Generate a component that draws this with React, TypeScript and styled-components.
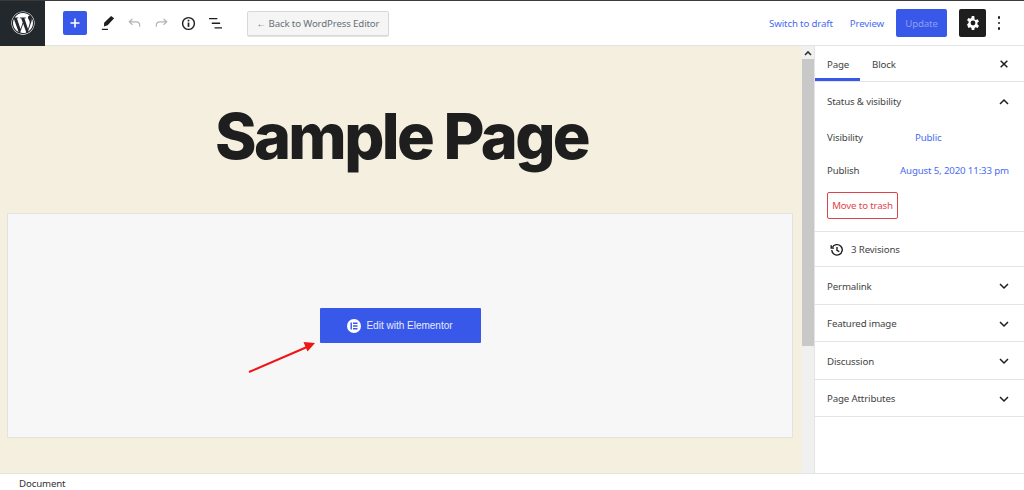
import React from 'react'
import styled, { createGlobalStyle } from 'styled-components'
import { FaWordpress } from 'react-icons/fa'

const $blue = '#3858e9'
const $link = '#4a6bf0'
const $line = '#e4e4e4'

const GlobalStyle = createGlobalStyle`
  html, body { margin: 0; padding: 0; background: #fff; }
  body {
    font-family: "Noto Sans", "Open Sans", sans-serif;
    font-size: 9.7px;
    letter-spacing: -0.15px;
    color: #444;
  }
  * { box-sizing: border-box; }
`

const Chevron = ({ up }: { up?: boolean }) => (
  <svg width="12" height="12" viewBox="0 0 12 12" fill="none" stroke="#1e1e1e" strokeWidth="1.5">
    <path d={up ? 'M2 8 6 4l4 4' : 'M2 4l4 4 4-4'} />
  </svg>
)

const panels = ['Permalink', 'Featured image', 'Discussion', 'Page Attributes']

export default function App() {
  return (
    <Screen>
      <GlobalStyle />
      <Header>
        <Logo>
          <FaWordpress size={24} color="#fff" />
        </Logo>
        <Tools>
          <AddButton>
            <svg width="14" height="14" viewBox="0 0 14 14" fill="none" stroke="#fff" strokeWidth="1.6">
              <path d="M7 2.5v9M2.5 7h9" />
            </svg>
          </AddButton>
          <ToolIcon>
            <svg width="14" height="16" viewBox="0 0 16 18" fill="#1e1e1e">
              <path d="M11.5 1 15 3.6 7.6 11.6 3.4 13 3.6 8.6z" />
              <path d="M1 15.6h7v1.4H1z" />
            </svg>
          </ToolIcon>
          <ToolIcon>
            <svg width="13" height="10" viewBox="0 0 16 12" fill="none" stroke="#b4b4b4" strokeWidth="1.5">
              <path d="M5.5 1 1.6 4.6l3.9 3.6M1.8 4.6h8.2c2.6 0 4.4 1.9 4.4 4.6v1.3" />
            </svg>
          </ToolIcon>
          <ToolIcon>
            <svg width="13" height="10" viewBox="0 0 16 12" fill="none" stroke="#b4b4b4" strokeWidth="1.5">
              <path d="M10.5 1l3.9 3.6-3.9 3.6M14.2 4.6H6c-2.6 0-4.4 1.9-4.4 4.6v1.3" />
            </svg>
          </ToolIcon>
          <ToolIcon>
            <svg width="15" height="15" viewBox="0 0 16 16" fill="none" stroke="#1e1e1e" strokeWidth="1.5">
              <circle cx="8" cy="8" r="6.3" />
              <path d="M8 7v4.6" strokeWidth="1.8" />
              <path d="M8 4v1.8" strokeWidth="1.8" />
            </svg>
          </ToolIcon>
          <ToolIcon>
            <svg width="15" height="13" viewBox="0 0 16 14" fill="#1e1e1e">
              <path d="M1 1h9v1.5H1zM4 6h9v1.5H4zM7 11h8v1.5H7z" />
            </svg>
          </ToolIcon>
        </Tools>
        <BackButton>← Back to WordPress Editor</BackButton>
        <Actions>
          <TextLink>Switch to draft</TextLink>
          <TextLink tight>Preview</TextLink>
          <UpdateButton>Update</UpdateButton>
          <SettingsButton>
            <svg width="16" height="16" viewBox="0 0 24 24" fill="#fff">
              <path
                fillRule="evenodd"
                d="M13.9 1.5h-3.8l-.5 3.1c-.6.2-1.2.5-1.7.9L5 4.4 3.1 7.7l2.4 2c-.1.7-.1 1.3 0 2l-2.4 2.6L5 19.6l2.9-1.1c.5.4 1.1.7 1.7.9l.5 3.1h3.8l.5-3.1c.6-.2 1.2-.5 1.7-.9l2.9 1.1 1.9-3.3-2.4-2.6c.1-.7.1-1.3 0-2l2.4-2-1.9-3.3-2.9 1.1c-.5-.4-1.1-.7-1.7-.9zM12 8.4a3.6 3.6 0 1 1 0 7.2 3.6 3.6 0 0 1 0-7.2z"
              />
            </svg>
          </SettingsButton>
          <MoreDots>
            <i />
            <i />
            <i />
          </MoreDots>
        </Actions>
      </Header>
      <Body>
        <Canvas>
          <PageTitle>Sample Page</PageTitle>
          <EditorBox>
            <ElementorButton>
              <ElementorBadge>
                <svg width="8" height="8" viewBox="0 0 8 8" fill={$blue}>
                  <path d="M0.5 0.5h1.4v7H0.5zM3 0.5h4.5v1.4H3zM3 3.3h4.5v1.4H3zM3 6.1h4.5v1.4H3z" />
                </svg>
              </ElementorBadge>
              Edit with Elementor
            </ElementorButton>
            <Arrow width="72" height="36" viewBox="0 0 72 36">
              <path d="M2 33 60 8" stroke="#f01414" strokeWidth="2" fill="none" />
              <path d="M68 4 56.5 3 60.5 12.5z" fill="#f01414" />
            </Arrow>
          </EditorBox>
        </Canvas>
        <Scrollbar>
          <ScrollUp>
            <svg width="8" height="6" viewBox="0 0 8 6" fill="none" stroke="#333" strokeWidth="1.6">
              <path d="M1 5 4 2l3 3" />
            </svg>
          </ScrollUp>
          <ScrollThumb />
        </Scrollbar>
        <Sidebar>
          <Tabs>
            <Tab active>Page</Tab>
            <Tab>Block</Tab>
            <CloseIcon width="10" height="10" viewBox="0 0 12 12" fill="none" stroke="#1e1e1e" strokeWidth="1.8">
              <path d="M2 2l8 8M10 2l-8 8" />
            </CloseIcon>
          </Tabs>
          <StatusPanel>
            <PanelHead>
              Status &amp; visibility
              <Chevron up />
            </PanelHead>
            <MetaRow>
              <MetaLabel>Visibility</MetaLabel>
              <MetaValue indent={88}>Public</MetaValue>
            </MetaRow>
            <MetaRow>
              <MetaLabel>Publish</MetaLabel>
              <MetaValue indent={73}>August 5, 2020 11:33 pm</MetaValue>
            </MetaRow>
            <TrashButton>Move to trash</TrashButton>
          </StatusPanel>
          <Revisions>
            <svg width="14" height="14" viewBox="0 0 16 16" fill="none" stroke="#1e1e1e" strokeWidth="1.6">
              <path d="M2.6 5.2A6 6 0 1 1 2 8" />
              <path d="M1.4 2.6v3.2h3.2" />
              <path d="M8 4.6V8.4l2.6 1.4" />
            </svg>
            3 Revisions
          </Revisions>
          {panels.map(name => (
            <Panel key={name}>
              {name}
              <Chevron />
            </Panel>
          ))}
        </Sidebar>
      </Body>
      <Footer>Document</Footer>
    </Screen>
  )
}

const Screen = styled.div`
  width: 1024px;
  height: 490px;
  display: flex;
  flex-direction: column;
  overflow: hidden;
`

const Header = styled.header`
  height: 46px;
  flex: none;
  display: flex;
  align-items: center;
  background: #fff;
  border-top: 1px solid #3a3a3a;
  border-bottom: 1px solid ${$line};
`

const Logo = styled.div`
  width: 45px;
  height: 45px;
  flex: none;
  display: flex;
  align-items: center;
  justify-content: center;
  background: #23282d;
`

const Tools = styled.div`
  display: flex;
  align-items: center;
  gap: 10px;
  margin-left: 18px;
`

const AddButton = styled.div`
  width: 24px;
  height: 24px;
  display: flex;
  align-items: center;
  justify-content: center;
  background: ${$blue};
  border-radius: 2px;
  margin-right: 2px;
`

const ToolIcon = styled.div`
  width: 17px;
  height: 24px;
  display: flex;
  align-items: center;
  justify-content: center;
`

const BackButton = styled.div`
  margin-left: 23px;
  height: 25px;
  width: 142px;
  padding-top: 1px;
  display: flex;
  align-items: center;
  justify-content: center;
  white-space: nowrap;
  color: #6b7177;
  background: #f5f5f5;
  border: 1px solid #d8d8d8;
  border-radius: 2px;
  box-shadow: 0 1px 0 #e4e4e4;
`

const Actions = styled.div`
  margin-left: auto;
  padding-right: 12px;
  display: flex;
  align-items: center;
`

const TextLink = styled.span<{ tight?: boolean }>`
  padding-top: 1px;
  color: ${$link};
  margin-right: ${p => (p.tight ? 12 : 17)}px;
  white-space: nowrap;
`

const UpdateButton = styled.div`
  width: 51px;
  height: 28px;
  padding-top: 1px;
  display: flex;
  align-items: center;
  justify-content: center;
  color: #8b9ef5;
  background: ${$blue};
  border-radius: 2px;
`

const SettingsButton = styled.div`
  width: 27px;
  height: 28px;
  margin-left: 12px;
  display: flex;
  align-items: center;
  justify-content: center;
  background: #1e1e1e;
  border-radius: 2px;
`

const MoreDots = styled.div`
  width: 26px;
  display: flex;
  flex-direction: column;
  align-items: center;
  gap: 3px;

  i {
    display: block;
    width: 2.5px;
    height: 2.5px;
    border-radius: 50%;
    background: #1e1e1e;
  }
`

const Body = styled.div`
  flex: 1;
  min-height: 0;
  display: flex;
`

const Canvas = styled.main`
  width: 802px;
  flex: none;
  padding: 0 9px 0 7px;
  background: #f5efe0;
`

const PageTitle = styled.h1`
  margin: 0;
  height: 167px;
  padding: 49px 0 0 3px;
  text-align: center;
  font-family: Inter, sans-serif;
  font-size: 63px;
  font-weight: 800;
  line-height: 82px;
  letter-spacing: -2.6px;
  color: #1e1e1e;
`

const EditorBox = styled.section`
  position: relative;
  height: 225px;
  display: flex;
  align-items: center;
  justify-content: center;
  background: #f7f7f7;
  border: 1px solid #e2e2e0;
`

const ElementorButton = styled.div`
  width: 161px;
  height: 35px;
  display: flex;
  align-items: center;
  justify-content: center;
  gap: 5px;
  font-family: "Liberation Sans", Arial, sans-serif;
  font-size: 10px;
  letter-spacing: 0;
  color: #e8ebfd;
  background: ${$blue};
  border-radius: 1px;
`

const ElementorBadge = styled.span`
  width: 14px;
  height: 14px;
  display: flex;
  align-items: center;
  justify-content: center;
  background: #fff;
  border-radius: 50%;
`

const Arrow = styled.svg`
  position: absolute;
  left: 239px;
  top: 125px;
`

const Scrollbar = styled.div`
  width: 12px;
  flex: none;
  background: #f0f0f0;
  display: flex;
  flex-direction: column;
`

const ScrollUp = styled.div`
  height: 13px;
  display: flex;
  align-items: center;
  justify-content: center;
`

const ScrollThumb = styled.div`
  height: 287px;
  background: #c8c8c8;
`

const Sidebar = styled.aside`
  flex: 1;
  min-width: 0;
  border-left: 1px solid ${$line};
  color: #444;
`

const Tabs = styled.div`
  height: 36px;
  display: flex;
  align-items: stretch;
  border-bottom: 1px solid ${$line};
`

const Tab = styled.div<{ active?: boolean }>`
  padding: 1px 0 0 12px;
  width: ${p => (p.active ? '45px' : 'auto')};
  display: flex;
  align-items: center;
  box-shadow: ${p => (p.active ? `inset 0 -3px 0 ${$blue}` : 'none')};
`

const CloseIcon = styled.svg`
  margin: auto 15px auto auto;
`

const StatusPanel = styled.section`
  height: 150px;
  padding: 0 14px 0 12px;
  border-bottom: 1px solid ${$line};
`

const PanelHead = styled.div`
  height: 38px;
  padding-top: 1px;
  display: flex;
  align-items: center;
  justify-content: space-between;
`

const MetaRow = styled.div`
  height: 33px;
  padding-top: 2px;
  display: flex;
  align-items: center;
`

const MetaLabel = styled.span`
  width: 0;
  white-space: nowrap;
`

const MetaValue = styled.span<{ indent: number }>`
  margin-left: ${p => p.indent}px;
  color: ${$link};
  white-space: nowrap;
`

const TrashButton = styled.div`
  width: 71px;
  height: 27px;
  margin-top: 6px;
  display: flex;
  align-items: center;
  justify-content: center;
  white-space: nowrap;
  color: #e0474c;
  border: 1px solid #d9434a;
  border-radius: 2px;
`

const Revisions = styled.div`
  height: 35px;
  padding: 1px 0 0 15px;
  display: flex;
  align-items: center;
  gap: 7px;
  border-bottom: 1px solid ${$line};
`

const Panel = styled.div`
  height: 37.5px;
  padding: 2px 14px 0 12px;
  display: flex;
  align-items: center;
  justify-content: space-between;
  border-bottom: 1px solid ${$line};
`

const Footer = styled.footer`
  height: 17px;
  flex: none;
  padding: 2px 0 0 19px;
  display: flex;
  align-items: center;
  color: #333;
  background: #fff;
  border-top: 1px solid ${$line};
`
